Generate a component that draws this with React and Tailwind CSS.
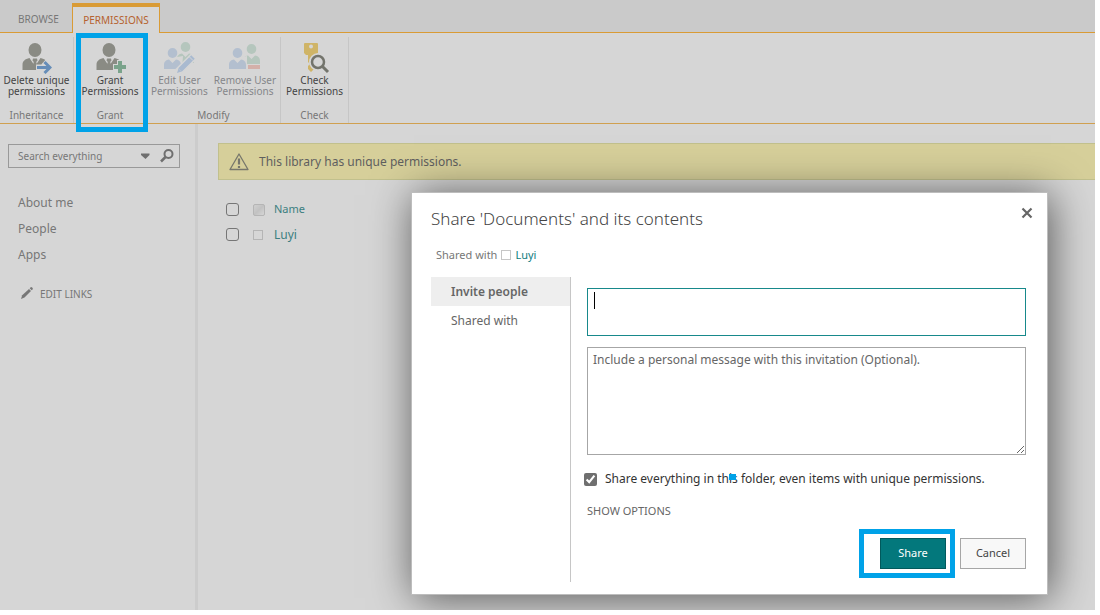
import { useState } from "react";

const Person = ({ color = "#8a8b84" }) => (
    <g fill={color}>
        <ellipse cx="15" cy="8" rx="6.5" ry="7" />
        <path d="M2.500 28V23C2.500 19 5 17 9.500 16L13.500 22L15 24L16.500 22L20.500 16C25 17 27.500 19 27.500 23V28Z" />
        <path d="M13 16.500H17L17.500 18.500L16.200 20L17 22.500L15 26L13 22.500L13.800 20L12.500 18.500Z" />
    </g>
);

const SmallPerson = ({ x, y, color }) => (
    <g fill={color} transform={`translate(${x} ${y})`}>
        <ellipse cx="8.500" cy="5" rx="4.800" ry="5" />
        <path d="M0 21V17C0 13.500 2 12 5 11.500L8.500 15L12 11.500C15 12 17 13.500 17 17V21Z" />
    </g>
);

function DeleteIcon() {
    return (
        <svg className="w-8 h-8" viewBox="0 0 32 32">
            <Person />
            <path d="M16 25.500H29M23.500 20L29.500 25.500L23.500 31" fill="none" stroke="#d6d6d6" strokeWidth="6" />
            <path d="M17 25.500H30M24.500 20L30 25.500L24.500 31" fill="none" stroke="#668db8" strokeWidth="3" />
        </svg>
    );
}

function GrantIcon() {
    return (
        <svg className="w-8 h-8" viewBox="0 0 32 32">
            <Person />
            <path d="M26 18V32M19 25H33" fill="none" stroke="#d6d6d6" strokeWidth="6" />
            <path d="M26 19V31M20 25H32" fill="none" stroke="#7aa38b" strokeWidth="4" />
        </svg>
    );
}

function EditIcon() {
    return (
        <svg className="w-8 h-8" viewBox="0 0 32 32">
            <SmallPerson x={14} y={0} color="#b5c6bd" />
            <path d="M0 27V23C0 18 4 16 8 16L20 14L19 27Z" fill="#d6d6d6" />
            <SmallPerson x={1} y={6} color="#b3bfcf" />
            <path d="M14 31L31 14" stroke="#d6d6d6" strokeWidth="8" />
            <path d="M17 28L30 15" stroke="#a9bad0" strokeWidth="5" />
            <path d="M14 31L15.500 26.500L18.500 29.500Z" fill="#a9bad0" />
            <path d="M26.500 15L30 18.500" stroke="#d6d6d6" strokeWidth="1" />
        </svg>
    );
}

function RemoveIcon() {
    return (
        <svg className="w-8 h-8" viewBox="0 0 32 32">
            <SmallPerson x={14} y={2} color="#b5c6bd" />
            <path d="M0 27V23C0 18 4 16 8 16L18 14V27Z" fill="#d6d6d6" />
            <SmallPerson x={0} y={6} color="#b3bfcf" />
            <path d="M18 22H32V28H18Z" fill="#d6d6d6" />
            <path d="M19 23H31V27H19Z" fill="#d3b0a9" />
        </svg>
    );
}

function CheckIcon() {
    return (
        <svg className="w-8 h-8" viewBox="0 0 32 32">
            <path fillRule="evenodd" fill="#cfb467" d="M6 1H18Q19 1 19 2V11L17 13H15V27L12 30L9 27V24L11 22L9 20V13H7L5 11V2Q5 1 6 1ZM12 2.500A2 2 0 1 0 12 6.500A2 2 0 1 0 12 2.500Z" />
            <circle cx="19" cy="20" r="7" fill="#d6d6d6" stroke="#d6d6d6" strokeWidth="4" />
            <circle cx="19" cy="20" r="6" fill="#d6d6d6" stroke="#73746c" strokeWidth="2.500" />
            <path d="M23.500 24.500L29 30" stroke="#73746c" strokeWidth="3" />
        </svg>
    );
}

function RibbonButton({ icon, lines, disabled }) {
    return (
        <button
            type="button"
            disabled={disabled}
            className={`flex flex-col items-center text-[10px] leading-[11px] ${disabled ? "text-[#85868a]" : "text-[#444]"}`}
        >
            {icon}
            <span className="mt-px whitespace-nowrap">
                {lines[0]}
                <br />
                {lines[1]}
            </span>
        </button>
    );
}

function RibbonGroup({ label, className, children }) {
    return (
        <div className={`flex flex-col justify-between ${className}`}>
            <div className="flex justify-center gap-1.5">{children}</div>
            <div className="text-center text-[10px] leading-4 text-[#777]">{label}</div>
        </div>
    );
}

function Ribbon() {
    return (
        <header>
            <div className="flex h-[33px] items-end border-b border-[#d99b35] bg-[#cacaca] text-[10px]">
                <a href="#browse" className="w-[72px] pl-[18px] leading-[25px] text-[#777]">BROWSE</a>
                <a
                    href="#permissions"
                    className="-mb-px h-[30px] w-[88px] border border-t-4 border-b-0 border-[#d99b35] bg-[#d6d6d6] text-center leading-[26px] text-[#b5622f]"
                >
                    PERMISSIONS
                </a>
            </div>
            <div className="relative flex h-[91px] border-b border-[#d0a050] pt-1">
                <RibbonGroup label="Inheritance" className="w-[74px] border-r border-[#c6c6c6] pt-[5px]">
                    <RibbonButton icon={<DeleteIcon />} lines={["Delete unique", "permissions"]} />
                </RibbonGroup>
                <RibbonGroup label="Grant" className="w-[73px] border-r border-[#c6c6c6] pt-[5px]">
                    <RibbonButton icon={<GrantIcon />} lines={["Grant", "Permissions"]} />
                </RibbonGroup>
                <RibbonGroup label="Modify" className="w-[134px] border-r border-[#c6c6c6] pt-[5px]">
                    <RibbonButton disabled icon={<EditIcon />} lines={["Edit User", "Permissions"]} />
                    <RibbonButton disabled icon={<RemoveIcon />} lines={["Remove User", "Permissions"]} />
                </RibbonGroup>
                <RibbonGroup label="Check" className="w-[68px] border-r border-[#c6c6c6] pt-[5px]">
                    <RibbonButton icon={<CheckIcon />} lines={["Check", "Permissions"]} />
                </RibbonGroup>
                {/* Callout around the Grant group */}
                <div className="pointer-events-none absolute top-0 left-[76px] h-[99px] w-[72px] border-5 border-[#00a2e8]" />
            </div>
        </header>
    );
}

function SideNav() {
    return (
        <aside className="w-[198px] shrink-0 border-r-3 border-[#cccccc] pt-5 pl-2">
            <form className="flex h-6 w-[172px] items-center border border-[#999] pr-1" onSubmit={(e) => e.preventDefault()}>
                <input
                    type="text"
                    aria-label="Search everything"
                    placeholder="Search everything"
                    className="min-w-0 flex-1 bg-transparent pl-[9px] text-[10px] outline-none placeholder:text-[#777]"
                />
                <button type="button" aria-label="Search scope" className="mr-2">
                    <svg className="h-3 w-3" viewBox="0 0 12 12">
                        <path d="M2 3.500H10.500V5L6.500 9L2 5Z" fill="#6f6f6f" />
                    </svg>
                </button>
                <button type="submit" aria-label="Search">
                    <svg className="h-4 w-4" viewBox="0 0 16 16" fill="none" stroke="#6f6f6f">
                        <circle cx="9.500" cy="6" r="4" strokeWidth="2" />
                        <path d="M6.500 9L2 13.500" strokeWidth="2.500" />
                    </svg>
                </button>
            </form>
            <nav className="mt-[22px] flex flex-col pl-[10px] text-xs leading-[26px] text-[#777]">
                <a href="#about">About me</a>
                <a href="#people">People</a>
                <a href="#apps">Apps</a>
                <a href="#edit" className="mt-[13px] flex items-center gap-1 text-[10px] leading-[26px]">
                    <svg className="h-[18px] w-[18px]" viewBox="0 0 18 18" fill="#777">
                        <path d="M3 14L4.200 10.200L11 4L13 6L6.500 12.500Z" />
                        <path d="M11.700 3.300L13 2Q14.500 2 15 4L13.700 5.300Z" />
                    </svg>
                    EDIT LINKS
                </a>
            </nav>
        </aside>
    );
}

function Content() {
    return (
        <main className="min-w-0 flex-1 pt-[19px] pl-5">
            <div className="flex h-[37px] items-center gap-[10px] border border-r-0 border-[#c1c08d] bg-[#d6cf9a] pl-[10px] text-xs text-[#5f5f5f]">
                <svg className="h-[18px] w-[20px]" viewBox="0 0 20 18" fill="none" stroke="#77776c">
                    <path d="M10 1L19 16.500H1Z" strokeWidth="1.300" strokeLinejoin="round" />
                    <path d="M10 5.500V11.500M10 13V15" strokeWidth="2.200" />
                </svg>
                This library has unique permissions.
            </div>
            <table className="mt-[17px] ml-2 text-left text-[#3c7f80]">
                <thead>
                    <tr className="h-[25px]">
                        <th className="w-[27px]">
                            <input type="checkbox" aria-label="Select all" className="block h-[13px] w-[13px] appearance-none rounded-[3px] border border-[#767676]" />
                        </th>
                        <th className="w-[21px]">
                            <div className="h-3 w-3 rounded-[2px] border border-[#b5b5b5] bg-gradient-to-br from-[#d0d0d0] via-[#c2c2c2] to-[#d6d6d6]" />
                        </th>
                        <th className="text-[11px] font-normal">Name</th>
                    </tr>
                </thead>
                <tbody>
                    <tr className="h-[25px]">
                        <td>
                            <input type="checkbox" aria-label="Select Luyi" className="block h-[13px] w-[13px] appearance-none rounded-[3px] border border-[#767676]" />
                        </td>
                        <td>
                            <div className="h-[10px] w-[10px] border border-[#b5b5b5]" />
                        </td>
                        <td className="text-xs">
                            <a href="#luyi">Luyi</a>
                        </td>
                    </tr>
                </tbody>
            </table>
        </main>
    );
}

function ShareDialog() {
    const [everything, setEverything] = useState(true);

    return (
        <div
            role="dialog"
            aria-labelledby="share-title"
            className="absolute top-[192px] right-[47px] left-[411px] border border-[#bdbdbd] bg-white pt-3 pr-[14px] pb-3 pl-[19px] shadow-[3px_3px_40px_0_rgba(0,0,0,0.6)]"
        >
            <div className="flex items-start justify-between">
                <h1 id="share-title" className="text-[17px] leading-7 font-light text-[#444]">
                    Share 'Documents' and its contents
                </h1>
                <button type="button" aria-label="Close" className="mt-[2px]">
                    <svg className="h-3 w-3" viewBox="0 0 12 12" stroke="#666" strokeWidth="2.200">
                        <path d="M1.500 1.500L10.500 10.500M10.500 1.500L1.500 10.500" />
                    </svg>
                </button>
            </div>
            <div className="mt-3 flex items-center gap-1 pl-[5px] text-[11px] leading-5 text-[#777]">
                Shared with
                <span className="h-[10px] w-[10px] border border-[#c6c6c6]" />
                <a href="#luyi" className="text-[#0f7c80]">Luyi</a>
            </div>
            <div className="mt-3 flex">
                <nav className="w-[140px] shrink-0 border-r border-[#c6c6c6] text-xs text-[#666]">
                    <a href="#invite" className="block bg-[#eee] pl-5 leading-[29px] font-semibold">Invite people</a>
                    <a href="#shared" className="block pl-5 leading-[29px]">Shared with</a>
                </nav>
                <div className="flex-1 pt-[11px] pr-[7px] pb-1 pl-4">
                    <div className="relative">
                        <textarea aria-label="People to invite" className="block h-12 w-full resize-none border border-[#17898b] p-1 text-xs outline-none" />
                        <span className="absolute top-1 left-[7px] h-[17px] w-px bg-black" />
                    </div>
                    <textarea
                        aria-label="Personal message"
                        placeholder="Include a personal message with this invitation (Optional)."
                        className="mt-[11px] block h-[108px] w-full resize border border-[#a6a6a6] px-[5px] py-1 text-xs outline-none placeholder:text-[#666]"
                    />
                    <label className="relative -ml-[3px] mt-4 flex items-center gap-2 text-xs text-[#333]">
                        <input
                            type="checkbox"
                            checked={everything}
                            onChange={(e) => setEverything(e.target.checked)}
                            className="h-[13px] w-[13px] accent-[#6f6f6f]"
                        />
                        Share everything in this folder, even items with unique permissions.
                        <span className="absolute top-[3px] left-[145px] h-[6px] w-[7px] bg-[#00a2e8]" />
                    </label>
                    <button type="button" className="mt-4 block text-[11px] leading-4 text-[#666]">SHOW OPTIONS</button>
                    <div className="mt-[10px] flex items-center justify-end gap-[5px] text-[11px]">
                        <div className="border-5 border-[#00a2e8] py-1 pr-1 pl-4">
                            <button type="submit" className="block h-[31px] w-[66px] border border-[#01595c] bg-[#03787c] text-white">Share</button>
                        </div>
                        <button type="button" className="h-[31px] w-[66px] border border-[#a6a6a6] bg-[#f8f8f8] text-[#444]">Cancel</button>
                    </div>
                </div>
            </div>
        </div>
    );
}

export default function App() {
    return (
        <div className="relative flex min-h-screen flex-col overflow-hidden bg-white pr-[5px] pb-[5px] font-['Noto_Sans','Open_Sans',sans-serif]">
            <div className="relative flex flex-1 flex-col overflow-hidden bg-[#d6d6d6]">
                <Ribbon />
                <div className="flex flex-1">
                    <SideNav />
                    <Content />
                </div>
                <ShareDialog />
            </div>
        </div>
    );
}
